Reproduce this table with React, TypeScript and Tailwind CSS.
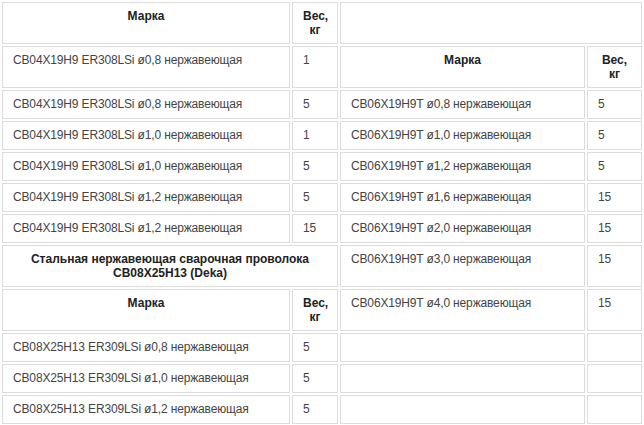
const LEFT_TOP = [
  ["CB04X19H9 ER308LSi ø0,8 нержавеющая", "1"],
  ["CB04X19H9 ER308LSi ø0,8 нержавеющая", "5"],
  ["CB04X19H9 ER308LSi ø1,0 нержавеющая", "1"],
  ["CB04X19H9 ER308LSi ø1,0 нержавеющая", "5"],
  ["CB04X19H9 ER308LSi ø1,2 нержавеющая", "5"],
  ["CB04X19H9 ER308LSi ø1,2 нержавеющая", "15"],
];

const RIGHT = [
  ["CB06X19H9T ø0,8 нержавеющая", "5"],
  ["CB06X19H9T ø1,0 нержавеющая", "5"],
  ["CB06X19H9T ø1,2 нержавеющая", "5"],
  ["CB06X19H9T ø1,6 нержавеющая", "15"],
  ["CB06X19H9T ø2,0 нержавеющая", "15"],
  ["CB06X19H9T ø3,0 нержавеющая", "15"],
  ["CB06X19H9T ø4,0 нержавеющая", "15"],
];

const LEFT_BOTTOM = [
  ["CB08X25H13 ER309LSi ø0,8 нержавеющая", "5"],
  ["CB08X25H13 ER309LSi ø1,0 нержавеющая", "5"],
  ["CB08X25H13 ER309LSi ø1,2 нержавеющая", "5"],
];

// shared cell look: light grey frame, top-aligned text
const cell = "border border-[#dcdcdc] align-top px-[10px] pt-[6px] pb-[6px]";
const head = `${cell} font-bold text-center text-[#222]`;
const data = `${cell} h-[29px] text-left font-normal text-[#444] tracking-[-0.15px]`;

function Brand() {
  return <th className={head}>Марка</th>;
}

function Weight() {
  return (
    <th className={head}>
      Вес,
      <br />
      кг
    </th>
  );
}

function Pair({ row }: { row?: string[] }) {
  return (
    <>
      <td className={data}>{row ? row[0] : ""}</td>
      <td className={data}>{row ? row[1] : ""}</td>
    </>
  );
}

export default function App() {
  return (
    <div className="w-[644px] h-[425px] overflow-hidden bg-white">
      <table
        className="table-fixed border-separate border-spacing-[2px] w-[644px] text-[12px] leading-[14px]"
        style={{ fontFamily: '"Liberation Sans", Arial, sans-serif' }}
      >
        <colgroup>
          <col className="w-[288px]" />
          <col className="w-[46px]" />
          <col className="w-[245px]" />
          <col className="w-[55px]" />
        </colgroup>
        <tbody>
          <tr>
            <Brand />
            <Weight />
            <td className={`${cell}`} colSpan={2}></td>
          </tr>
          <tr>
            <Pair row={LEFT_TOP[0]} />
            <Brand />
            <Weight />
          </tr>
          {LEFT_TOP.slice(1).map((l, i) => (
            <tr key={i}>
              <Pair row={l} />
              <Pair row={RIGHT[i]} />
            </tr>
          ))}
          <tr>
            <th className={head} colSpan={2}>
              Стальная нержавеющая сварочная проволока
              <br />
              CB08X25H13 (Deka)
            </th>
            <Pair row={RIGHT[5]} />
          </tr>
          <tr>
            <Brand />
            <Weight />
            <Pair row={RIGHT[6]} />
          </tr>
          {LEFT_BOTTOM.map((l, i) => (
            <tr key={i}>
              <Pair row={l} />
              <Pair />
            </tr>
          ))}
        </tbody>
      </table>
    </div>
  );
}
